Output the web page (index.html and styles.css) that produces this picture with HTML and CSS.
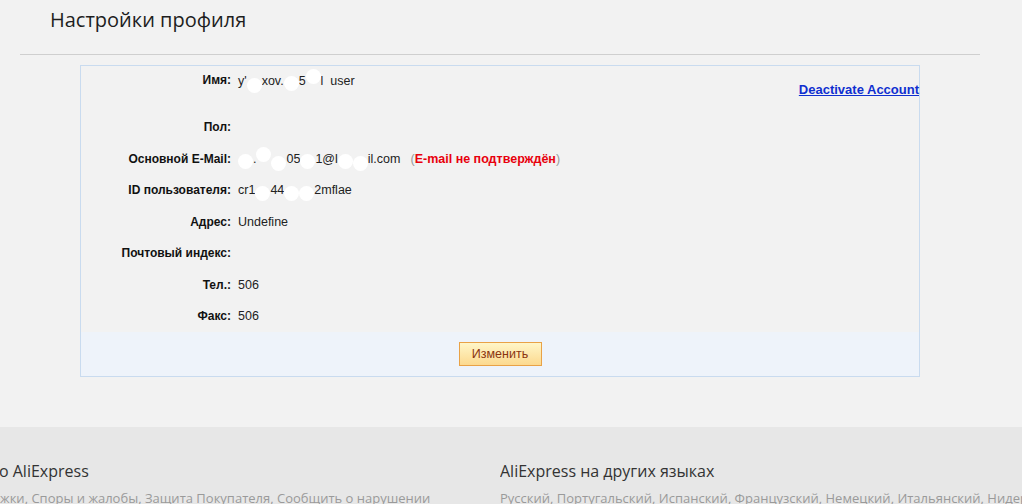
FILE: index.html
```html
<!DOCTYPE html>
<html lang="ru">
<head>
  <meta charset="UTF-8" />
  <title>Настройки профиля</title>
  <link rel="stylesheet" href="styles.css">
</head>
<body>

  <!-- Page header -->
  <div class="page-head">
    <h1 class="page-title">Настройки профиля</h1>
  </div>

  <!-- Profile info -->
  <div class="profile-box">
    <div class="profile-info">
      <div class="label first">Имя:</div>
      <div class="value first">y'<span class="blot low"></span>xov.<span class="blot"></span>5<span class="blot high"></span>l&nbsp;&nbsp;user</div>
      <div class="side-link"><a href="#" class="deactivate">Deactivate Account</a></div>

      <div class="label">Пол:</div>
      <div class="value"></div>

      <div class="label">Основной E-Mail:</div>
      <div class="value wide"><span class="blot"></span>.<span class="blot high"></span><span class="blot low"></span>05<span class="blot"></span>1@l<span class="blot"></span><span class="blot low"></span>il.com <span class="note">(<b>E-mail не подтверждён</b>)</span></div>

      <div class="label">ID пользователя:</div>
      <div class="value">cr1<span class="blot"></span>44<span class="blot"></span><span class="blot"></span>2mflae</div>

      <div class="label">Адрес:</div>
      <div class="value">Undefine</div>

      <div class="label">Почтовый индекс:</div>
      <div class="value"></div>

      <div class="label">Тел.:</div>
      <div class="value">506</div>

      <div class="label">Факс:</div>
      <div class="value">506</div>
    </div>

    <div class="profile-actions">
      <button class="edit-button">Изменить</button>
    </div>
  </div>

  <!-- Footer -->
  <div class="site-footer">
    <div class="footer-col col-about">
      <h3 class="footer-title">Информация о AliExpress</h3>
      <p class="footer-links">Служба поддержки, Споры и жалобы, Защита Покупателя, Сообщить о нарушении</p>
    </div>
    <div class="footer-col col-lang">
      <h3 class="footer-title">AliExpress на других языках</h3>
      <p class="footer-links">Русский, Португальский, Испанский, Французский, Немецкий, Итальянский, Нидерландский, Турецкий</p>
    </div>
  </div>

</body>
</html>
```

FILE: styles.css
```css
* {
  margin: 0;
  padding: 0;
  box-sizing: border-box;
}

html, body {
  height: 100%;
  overflow: hidden;
}

body {
  background: #f2f2f2;
  font-family: 'Liberation Sans', Arial, sans-serif;
  color: #111;
}

/* Header */
.page-head {
  margin: 0 42px 0 20px;
  height: 55px;
  border-bottom: 1px solid #cfcfcf;
  padding: 6px 0 0 30px;
}

.page-title {
  font-family: 'Open Sans', sans-serif;
  font-weight: normal;
  font-size: 20px;
  line-height: 28px;
  color: #1e1e1e;
}

/* Profile box */
.profile-box {
  margin: 10px 0 0 80px;
  width: 840px;
  border: 1px solid #c9dbef;
}

.profile-info {
  display: grid;
  grid-template-columns: 150px 1fr auto;
  grid-auto-rows: 31.5px;
  grid-template-rows: 45.5px;
  column-gap: 7px;
}

.label {
  grid-column: 1;
  text-align: right;
  font-weight: bold;
  font-size: 12px;
  color: #111;
  align-self: center;
}

.value {
  grid-column: 2;
  font-size: 12.5px;
  color: #222;
  align-self: center;
  display: flex;
  align-items: center;
  white-space: nowrap;
}

.label.first,
.value.first {
  align-self: start;
  margin-top: 7px;
}

.blot {
  display: inline-block;
  width: 15px;
  height: 15px;
  border-radius: 50%;
  background: #fff;
  position: relative;
  top: 3px;
}

.blot.high { top: -4px; }
.blot.low { top: 5px; }

.note {
  margin-left: 10px;
  color: #999;
}

.note b {
  color: #e8000d;
}

.side-link {
  grid-column: 3;
  grid-row: 1;
  align-self: start;
  margin-top: 14px;
}

.deactivate {
  font-weight: bold;
  font-size: 13px;
  color: #0f2fd0;
  text-decoration: underline;
}

.profile-actions {
  background: #eef3fa;
  height: 44px;
  display: flex;
  justify-content: center;
  align-items: center;
}

.edit-button {
  width: 83px;
  height: 24px;
  border: 1px solid #e9a246;
  background: linear-gradient(#fff6c8, #fcd98f);
  color: #8a3410;
  font-family: 'Liberation Sans', Arial, sans-serif;
  font-size: 12.5px;
  cursor: pointer;
}

/* Footer */
.site-footer {
  margin-top: 50px;
  background: #e7e7e7;
  height: 100px;
  display: flex;
  padding-top: 33px;
  white-space: nowrap;
  overflow: hidden;
}

.footer-col {
  flex: none;
  overflow: hidden;
}

.col-about {
  width: 608px;
  margin-left: -108px;
  padding-right: 75px;
}

.col-about .footer-links {
  margin-left: 12px;
}

.col-lang {
  width: 522px;
}

.footer-title {
  font-family: 'Open Sans', sans-serif;
  font-weight: normal;
  font-size: 16px;
  line-height: 22px;
  color: #333;
}

.footer-links {
  font-family: 'Open Sans', sans-serif;
  font-size: 13px;
  color: #9a9a9a;
  margin-top: 7px;
}
```
